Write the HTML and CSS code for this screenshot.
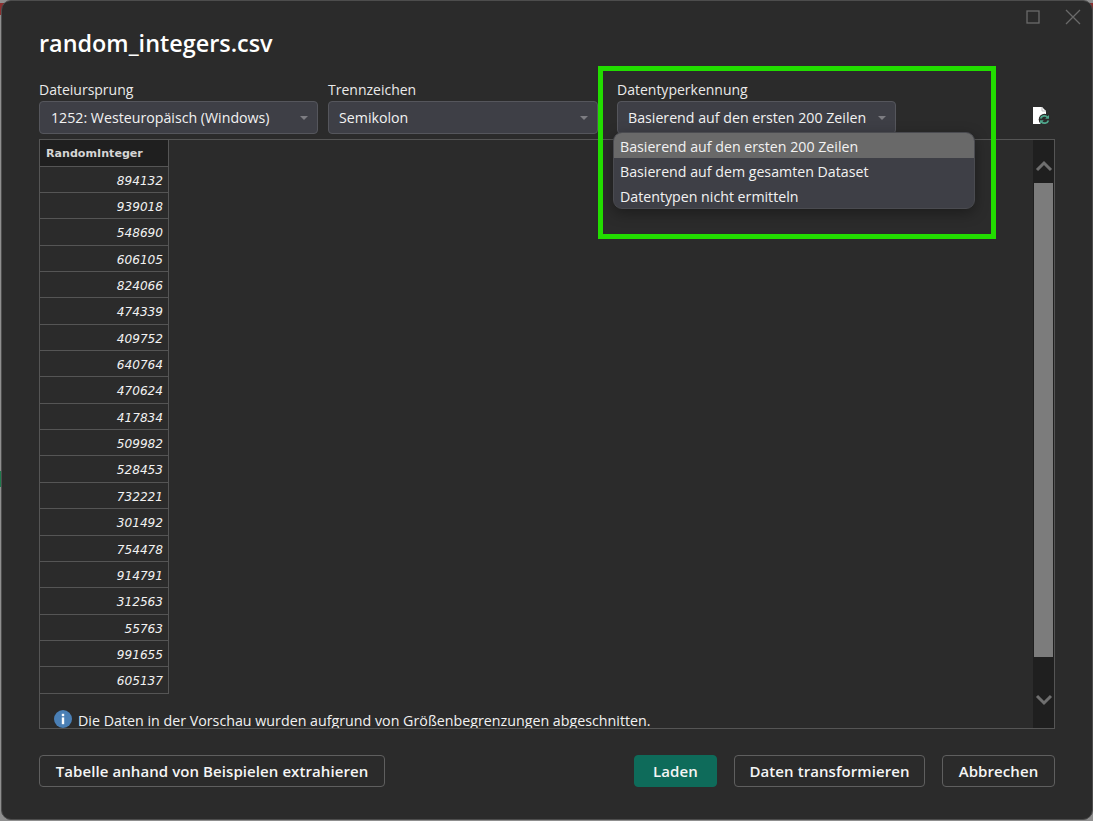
FILE: index.html

```html
<!DOCTYPE html>
<html lang="de">
<head>
    <meta charset="UTF-8">
    <meta name="viewport" content="width=device-width, initial-scale=1.0">
    <title>random_integers.csv</title>
    <link rel="stylesheet" href="styles.css">
</head>
<body>
    <div class="dialog">
        <div class="window-controls">
            <svg class="window-icon" width="14" height="14" viewBox="0 0 14 14"><rect x="1" y="1" width="12" height="12" fill="none" stroke="#6a6a6a" stroke-width="1.3"/></svg>
            <svg class="window-icon" width="16" height="16" viewBox="0 0 16 16"><path d="M1 1L15 15M15 1L1 15" fill="none" stroke="#6a6a6a" stroke-width="1.3"/></svg>
        </div>

        <h1 class="title">random_integers.csv</h1>

        <div class="options">
            <div class="field field-origin">
                <label>Dateiursprung</label>
                <div class="select"><span>1252: Westeuropäisch (Windows)</span><i class="caret"></i></div>
            </div>
            <div class="field field-delimiter">
                <label>Trennzeichen</label>
                <div class="select"><span>Semikolon</span><i class="caret"></i></div>
            </div>
            <div class="field field-detect">
                <label>Datentyperkennung</label>
                <div class="select"><span>Basierend auf den ersten 200 Zeilen</span><i class="caret"></i></div>
            </div>
            <svg class="refresh-icon" width="19" height="20" viewBox="0 0 19 20">
                <path d="M1 1H10L14 5V18H1Z" fill="#fff"/>
                <path d="M10 1V5H14" fill="none" stroke="#bbb" stroke-width="1"/>
                <circle cx="12.5" cy="13.5" r="5.8" fill="#2b2b2b"/>
                <path d="M8.6 12.6A4 4 0 0 1 15.6 11.4M16.4 14.4A4 4 0 0 1 9.4 15.6" fill="none" stroke="#4fa58b" stroke-width="1.8"/>
                <path d="M17 9V12.8H13.2ZM8 18V14.2H11.8Z" fill="#4fa58b"/>
            </svg>
        </div>

        <div class="preview">
            <div class="preview-body">
                <div class="data-table">
                    <div class="data-head">RandomInteger</div>
                    <div class="data-cell">894132</div>
                    <div class="data-cell">939018</div>
                    <div class="data-cell">548690</div>
                    <div class="data-cell">606105</div>
                    <div class="data-cell">824066</div>
                    <div class="data-cell">474339</div>
                    <div class="data-cell">409752</div>
                    <div class="data-cell">640764</div>
                    <div class="data-cell">470624</div>
                    <div class="data-cell">417834</div>
                    <div class="data-cell">509982</div>
                    <div class="data-cell">528453</div>
                    <div class="data-cell">732221</div>
                    <div class="data-cell">301492</div>
                    <div class="data-cell">754478</div>
                    <div class="data-cell">914791</div>
                    <div class="data-cell">312563</div>
                    <div class="data-cell">55763</div>
                    <div class="data-cell">991655</div>
                    <div class="data-cell">605137</div>
                </div>
                <div class="notice">
                    <svg class="notice-icon" width="18" height="18" viewBox="0 0 18 18"><circle cx="9" cy="9" r="9" fill="#4a7fb5"/><rect x="7.8" y="7.4" width="2.4" height="6.8" fill="#fff"/><rect x="7.8" y="3.8" width="2.4" height="2.4" fill="#fff"/></svg>
                    <span>Die Daten in der Vorschau wurden aufgrund von Größenbegrenzungen abgeschnitten.</span>
                </div>
            </div>
            <div class="scrollbar">
                <div class="scroll-btn scroll-up">
                    <svg width="18" height="12" viewBox="0 0 18 12"><path d="M2 10L9 3L16 10" fill="none" stroke="#6f6f6f" stroke-width="3"/></svg>
                </div>
                <div class="scroll-thumb"></div>
                <div class="scroll-btn scroll-down">
                    <svg width="18" height="12" viewBox="0 0 18 12"><path d="M2 2L9 9L16 2" fill="none" stroke="#6f6f6f" stroke-width="3"/></svg>
                </div>
            </div>
        </div>

        <div class="actions">
            <button class="btn btn-extract">Tabelle anhand von Beispielen extrahieren</button>
            <div class="actions-right">
                <button class="btn btn-primary">Laden</button>
                <button class="btn btn-transform">Daten transformieren</button>
                <button class="btn btn-cancel">Abbrechen</button>
            </div>
        </div>

        <ul class="dropdown">
            <li class="active">Basierend auf den ersten 200 Zeilen</li>
            <li>Basierend auf dem gesamten Dataset</li>
            <li>Datentypen nicht ermitteln</li>
        </ul>
        <div class="highlight"></div>
    </div>
</body>
</html>
```

FILE: styles.css

```css
* {
    box-sizing: border-box;
}

html, body {
    margin: 0;
    padding: 0;
    height: 100%;
}

body {
    background: linear-gradient(to bottom, #8f8f8f 3px, #8c2f2f 3px, #8c2f2f 15px, #8f8f8f 15px, #8f8f8f 471px, #1f7a4d 471px, #1f7a4d 487px, #8f8f8f 487px);
    font-family: "Open Sans", "Noto Sans", sans-serif;
    color: #f2f2f2;
    overflow: hidden;
}

.dialog {
    position: relative;
    width: 1092px;
    height: 820px;
    margin-left: 1px;
    padding: 0 37px;
    background: #2b2b2b;
    border: 1px solid #4d4d4d;
    border-radius: 10px;
    overflow: hidden;
}

.window-controls {
    display: flex;
    justify-content: flex-end;
    align-items: center;
    gap: 25px;
    height: 32px;
    margin-right: -26px;
}

.title {
    margin: 0;
    height: 33px;
    font-size: 23.4px;
    line-height: 21px;
    font-weight: 600;
    color: #fff;
}

.options {
    display: flex;
    align-items: flex-start;
    height: 73px;
    padding-top: 12px;
}

.field label {
    display: block;
    height: 23px;
    font-size: 14px;
    line-height: 23px;
    color: #eaeaea;
}

.field-origin {
    width: 279px;
    margin-right: 10px;
}

.field-delimiter {
    width: 270px;
    margin-right: 19px;
}

.field-detect {
    width: 279px;
}

.select {
    display: flex;
    justify-content: space-between;
    align-items: center;
    height: 33px;
    padding: 0 9px 0 10px;
    background: #3e3f46;
    border: 1px solid #55565c;
    border-radius: 4px;
    font-size: 14.2px;
}

.field-origin .select span {
    margin-left: 1px;
}

.caret {
    width: 0;
    height: 0;
    border-left: 4px solid transparent;
    border-right: 4px solid transparent;
    border-top: 4px solid #7d7d82;
}

.refresh-icon {
    margin: 28px 0 0 136px;
}

.preview {
    display: flex;
    height: 590px;
    border: 1px solid #555;
    overflow: hidden;
}

.preview-body {
    flex: 1;
    overflow: hidden;
}

.data-table {
    width: 129px;
    border-right: 1px solid #555;
}

.data-head {
    height: 26.5px;
    padding-left: 6px;
    background: #1f1f1f;
    border-bottom: 1px solid #555;
    font-family: "DejaVu Sans", sans-serif;
    font-size: 11.1px;
    line-height: 27px;
    font-weight: 700;
    color: #d5d5d5;
}

.data-cell {
    height: 26.37px;
    padding: 5px 5px 0 0;
    border-bottom: 1px solid #555;
    font-family: "DejaVu Sans", sans-serif;
    font-size: 12.1px;
    line-height: 19px;
    font-style: italic;
    text-align: right;
}

.notice {
    display: flex;
    align-items: center;
    gap: 6px;
    margin: 16px 0 0 14px;
    font-size: 14.25px;
}

.notice-icon {
    margin-bottom: 3px;
}

.scrollbar {
    display: flex;
    flex-direction: column;
    width: 21px;
    background: #1f1f1f;
}

.scroll-btn {
    display: flex;
    justify-content: center;
}

.scroll-up {
    height: 43px;
    padding-top: 20px;
}

.scroll-down {
    flex: 1;
    align-items: flex-end;
    padding-bottom: 22px;
}

.scroll-thumb {
    height: 474px;
    margin: 0 1px;
    background: #7c7c7c;
}

.actions {
    display: flex;
    justify-content: space-between;
    margin-top: 26px;
}

.actions-right {
    display: flex;
    gap: 17px;
}

.btn {
    height: 32px;
    padding: 0;
    background: transparent;
    border: 1px solid #5f5f5f;
    border-radius: 4px;
    font-family: inherit;
    font-size: 15px;
    font-weight: 600;
    letter-spacing: 0.08px;
    color: #f5f5f5;
    white-space: nowrap;
}

.btn-extract {
    width: 346px;
}

.btn-transform {
    width: 191px;
}

.btn-cancel {
    width: 113px;
}

.btn-primary {
    width: 83px;
    background: #0e6b5a;
    border-color: #0e6b5a;
}

.dropdown {
    position: absolute;
    left: 611px;
    top: 131px;
    width: 362px;
    height: 77px;
    margin: 0;
    padding: 0;
    list-style: none;
    background: #3e3f46;
    border: 1px solid #4a4b50;
    border-radius: 9px;
    overflow: hidden;
    box-shadow: 0 4px 14px rgba(0, 0, 0, 0.35);
    font-size: 14.2px;
}

.dropdown li {
    height: 25px;
    padding-left: 6px;
    line-height: 27px;
}

.dropdown li.active {
    background: #696969;
}

.highlight {
    position: absolute;
    left: 596px;
    top: 65px;
    width: 398px;
    height: 173px;
    border: 5px solid #22dd00;
}
```
